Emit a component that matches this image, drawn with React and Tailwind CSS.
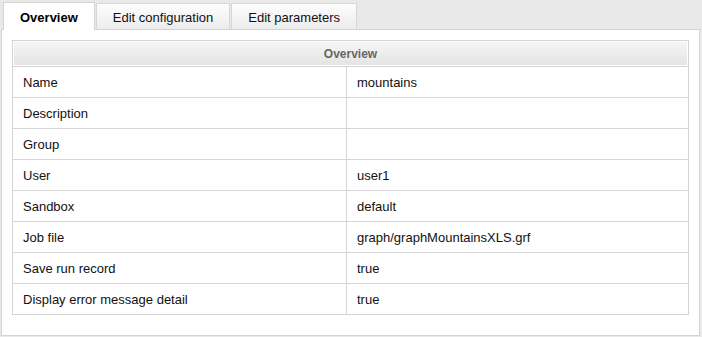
const rows = [
  ['Name', 'mountains'],
  ['Description', ''],
  ['Group', ''],
  ['User', 'user1'],
  ['Sandbox', 'default'],
  ['Job file', 'graph/graphMountainsXLS.grf'],
  ['Save run record', 'true'],
  ['Display error message detail', 'true'],
];

const tabs = ['Overview', 'Edit configuration', 'Edit parameters'];

export default function App() {
  return (
    <div className="w-[702px] h-[337px] bg-[#e9e9e9] font-['Liberation_Sans',Arial,sans-serif] text-[13px] text-[#111] overflow-hidden">
      {/* tab strip */}
      <div className="flex items-end gap-px pl-[3px] h-[29px]">
        {tabs.map((t, i) =>
          i === 0 ? (
            <div
              key={t}
              className="relative z-10 -mb-px h-[28px] px-4 pt-[2px] flex items-center bg-white border border-b-0 border-[#d3d3d3] font-bold text-black"
            >
              {t}
            </div>
          ) : (
            <div
              key={t}
              className="h-[26px] px-4 pt-[2px] flex items-center border border-b-0 border-[#d6d6d6] bg-gradient-to-b from-[#fdfdfd] to-[#ececec]"
            >
              {t}
            </div>
          )
        )}
      </div>

      {/* panel */}
      <div className="ml-px w-[699px] h-[307px] bg-white border border-[#d3d3d3] p-[10px]">
        <div className="border border-[#d3d3d3]">
          <div className="h-[26px] pt-px border-b border-[#d3d3d3] bg-gradient-to-b from-[#f6f6f6] to-[#e4e4e4] shadow-[inset_0_0_0_1px_#fff] flex items-center justify-center text-[12px] font-bold text-[#666]">
            Overview
          </div>
          {rows.map(([k, v]) => (
            <div
              key={k}
              className="grid grid-cols-[334px_1fr] h-[31px] border-b border-[#d6d6d6] last:border-b-0 last:h-[30px]"
            >
              <div className="border-r border-[#d6d6d6] flex items-center pl-[10px] pt-px">{k}</div>
              <div className="flex items-center pl-[10px] pt-px">{v}</div>
            </div>
          ))}
        </div>
      </div>
    </div>
  );
}
